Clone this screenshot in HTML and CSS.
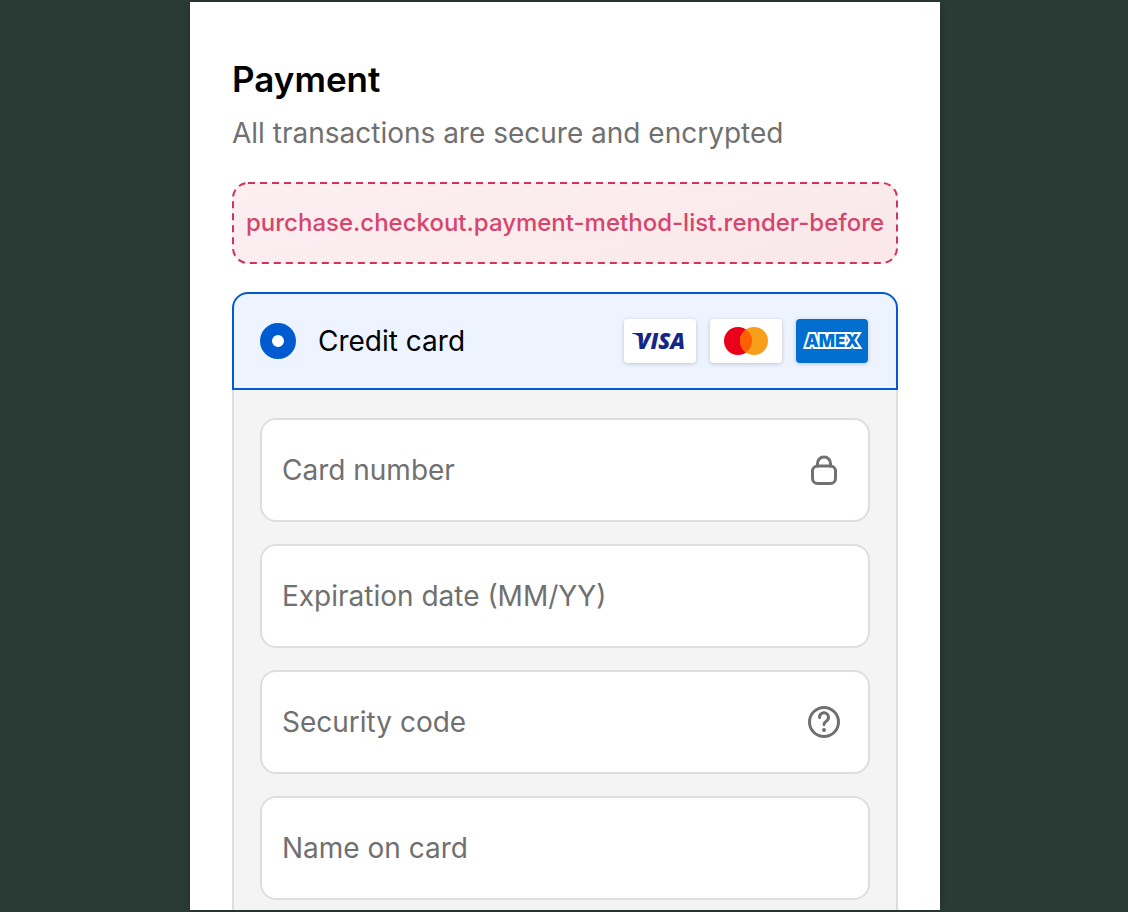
FILE: index.html
```html
<!DOCTYPE html>
<html lang="en">
<head>
  <meta charset="UTF-8" />
  <meta name="viewport" content="width=device-width, initial-scale=1.0"/>
  <title>Payment</title>
  <link rel="stylesheet" href="styles.css">
</head>
<body>

  <main class="checkout">
    <h1>Payment</h1>
    <p class="subtitle">All transactions are secure and encrypted</p>

    <div class="extension-target">
      <svg class="outline" aria-hidden="true"><rect x="1" y="1" rx="15"/></svg>
      purchase.checkout.payment-method-list.render-before
    </div>

    <form class="method">
      <div class="method-header">
        <input type="radio" id="credit_card" name="method" value="credit_card" checked />
        <label for="credit_card">Credit card</label>

        <div class="brands">
          <svg class="brand" viewBox="0 0 72 44" role="img" aria-label="Visa">
            <path d="M8 14h7c2 0 3 1 3.200 2.500l1.400 6C17 18 13 15.500 8 14.500z" fill="#142688"/>
            <text class="visa-text" x="37" y="30" text-anchor="middle">VISA</text>
          </svg>
          <svg class="brand" viewBox="0 0 72 44" role="img" aria-label="Mastercard">
            <circle cx="28" cy="22" r="14" fill="#eb001b"/>
            <circle cx="44" cy="22" r="14" fill="#f79e1b"/>
            <path d="M36 10.500a14 14 0 0 1 0 23a14 14 0 0 1 0-23z" fill="#ff5f00"/>
          </svg>
          <svg class="brand brand-amex" viewBox="0 0 72 44" role="img" aria-label="American Express">
            <text class="amex-text" x="36" y="28" text-anchor="middle">AMEX</text>
          </svg>
        </div>
      </div>

      <div class="fields">
        <div class="field">
          <input type="text" id="number" name="number" placeholder="Card number" aria-label="Card number" />
          <svg class="icon" viewBox="0 0 32 32" aria-hidden="true">
            <rect x="4.500" y="12" width="23" height="17.500" rx="5"/>
            <path d="M9.500 12V9.500a6.500 6.500 0 0 1 13 0V12"/>
          </svg>
        </div>
        <div class="field">
          <input type="text" id="expiry" name="expiry" placeholder="Expiration date (MM/YY)" aria-label="Expiration date (MM/YY)" />
        </div>
        <div class="field">
          <input type="text" id="code" name="code" placeholder="Security code" aria-label="Security code" />
          <button type="button" class="help" aria-label="What is a security code?">
            <svg class="icon" viewBox="0 0 32 32" aria-hidden="true">
              <circle cx="16" cy="16" r="14.500"/>
              <path d="M11.500 11.500a4.500 4.500 0 1 1 7 3.500c-1.500 1-2.500 1.800-2.500 3.500"/>
              <circle class="dot" cx="16" cy="24" r="2"/>
            </svg>
          </button>
        </div>
        <div class="field">
          <input type="text" id="name" name="name" placeholder="Name on card" aria-label="Name on card" />
        </div>
      </div>
    </form>
  </main>

</body>
</html>
```
FILE: styles.css
```css
* {
  box-sizing: border-box;
}

body {
  margin: 0;
  height: 100vh;
  padding: 2px 0 2px 2px;
  display: flex;
  justify-content: center;
  background: #2a3a35;
  font-family: Inter, sans-serif;
  font-size: 28px;
  color: #000;
}

.checkout {
  width: 100%;
  max-width: 750px;
  padding: 56px 42px 0;
  overflow: hidden;
  background: #fff;
  box-shadow: 0 0 8px rgba(0, 0, 0, 0.2);
}

h1 {
  margin: 0;
  font-size: 35px;
  line-height: 42px;
  font-weight: 600;
}

.subtitle {
  margin: 14px 0 30px;
  line-height: 38px;
  color: #707070;
}

.extension-target {
  position: relative;
  padding: 21px 14px;
  border-radius: 16px;
  background: linear-gradient(160deg, #fceff1, #fae8ea);
  color: #d6456b;
  font-size: 24px;
  line-height: 40px;
  font-weight: 500;
  text-align: center;
  white-space: nowrap;
}

.outline {
  position: absolute;
  inset: 0;
  width: 100%;
  height: 100%;
}

.outline rect {
  width: calc(100% - 2px);
  height: calc(100% - 2px);
  fill: none;
  stroke: #d0335d;
  stroke-width: 2px;
  stroke-dasharray: 7 5;
}

.method {
  margin-top: 28px;
}

.method-header {
  display: flex;
  align-items: center;
  gap: 22px;
  padding: 25px 28px 25px 26px;
  border: 2px solid #005bd1;
  border-radius: 16px 16px 0 0;
  background: #edf4ff;
}

.method-header input {
  appearance: none;
  width: 36px;
  height: 36px;
  margin: 0;
  border: 12px solid #005bd1;
  border-radius: 50%;
  background: #fff;
}

.brands {
  display: flex;
  gap: 14px;
  margin-left: auto;
}

.brand {
  width: 72px;
  height: 44px;
  border-radius: 4px;
  background: #fff;
  box-shadow: 0 1px 4px rgba(0, 0, 0, 0.2);
}

.brand-amex {
  background: #006fcf;
}

.visa-text {
  font-family: "Open Sans", sans-serif;
  font-size: 22px;
  font-style: italic;
  font-weight: 800;
  fill: #142688;
}

.amex-text {
  font-family: Inter, sans-serif;
  font-size: 17px;
  font-weight: 900;
  fill: #006fcf;
  stroke: #fff;
  stroke-width: 4px;
  paint-order: stroke;
}

.fields {
  display: grid;
  gap: 22px;
  padding: 28px 26px;
  border: 2px solid #dedede;
  border-top: none;
  background: #f4f4f4;
}

.field {
  display: flex;
  align-items: center;
  padding-right: 28px;
  border: 2px solid #dedede;
  border-radius: 16px;
  background: #fff;
}

.field input {
  flex: 1;
  min-width: 0;
  height: 100px;
  padding: 0 20px;
  border: none;
  outline: none;
  background: none;
  font: inherit;
}

.field input::placeholder {
  color: #707070;
  opacity: 1;
}

.help {
  display: flex;
  padding: 0;
  border: none;
  background: none;
  cursor: pointer;
}

.icon {
  width: 32px;
  height: 32px;
  fill: none;
  stroke: #707070;
  stroke-width: 3px;
  stroke-linecap: round;
}

.dot {
  fill: #707070;
  stroke: none;
}
```
